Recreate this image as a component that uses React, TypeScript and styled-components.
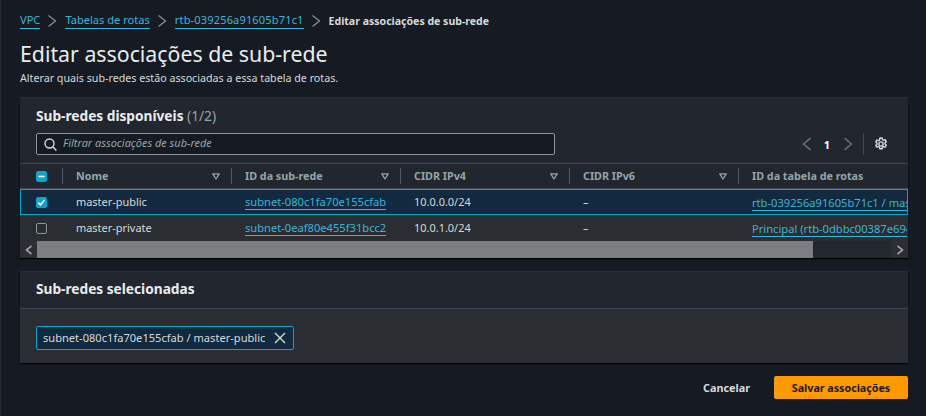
import React from "react";
import styled, { createGlobalStyle } from "styled-components";

const FONT = `"Noto Sans", "Open Sans", sans-serif`;

const Global = createGlobalStyle`
  html, body { margin: 0; padding: 0; background: #161a23; }
  body { font-family: ${FONT}; width: 926px; height: 416px; overflow: hidden; }
  * { box-sizing: border-box; }
`;

const Page = styled.div`
  width: 926px;
  height: 416px;
  padding: 13px 18px 0 20px;
  border-left: 1px solid #262a33;
  color: #d5dbdb;
  display: flex;
  flex-direction: column;
`;
const Crumbs = styled.nav`
  display: flex;
  align-items: center;
  height: 16px;
  margin-left: -1px;
  font-size: 11.1px;
  line-height: 16px;
  white-space: nowrap;
`;
const CrumbLink = styled.a<{ $tracking?: number }>`
  color: #39b6d8;
  border-bottom: 1px solid #39b6d8;
  line-height: 14px;
  height: 16px;
  letter-spacing: ${(p) => p.$tracking ?? 0}px;
`;
const CrumbSep = styled.svg`
  width: 10px;
  height: 12px;
  margin: 0 8px 0 7px;
  flex: none;
`;
const CrumbCurrent = styled.span`
  color: #d5dbdb;
  font-weight: 700;
  font-size: 10.55px;
`;
const Title = styled.h1`
  margin: 10px 0 0 -1px;
  font-size: 21.3px;
  line-height: 30px;
  font-weight: 400;
  color: #eaeded;
`;
const Subtitle = styled.p`
  margin: 0 0 0 -1px;
  font-size: 10.7px;
  line-height: 18px;
  color: #d5dbdb;
`;
const Panel = styled.section<{ $spaced?: boolean }>`
  margin: ${(p) => (p.$spaced ? 13 : 10)}px 0 0 -1px;
  background: #22262e;
  box-shadow: 0 1px 1px #000;
`;
const PanelTop = styled.div`
  padding: 8px 16px 8px;
  height: 66px;
  border-top: 1px solid #2a2e36;
  background: #22262e;
`;
const PanelTitle = styled.h2`
  margin: 0;
  font-size: 13.7px;
  line-height: 20px;
  font-weight: 700;
  color: #eaeded;
`;
const Count = styled.span`
  font-weight: 400;
  color: #95a5a6;
`;
const Toolbar = styled.div`
  display: flex;
  align-items: center;
  margin-top: 7px;
  height: 22px;
`;
const Filter = styled.div`
  width: 519px;
  height: 22px;
  border: 1px solid #8d9499;
  border-radius: 2px;
  background: #161a23;
  display: flex;
  align-items: center;
  padding-left: 7px;
  gap: 6px;
`;
const FilterText = styled.span`
  font-size: 10.95px;
  line-height: 14px;
  margin-top: -2px;
  font-style: italic;
  color: #95a5a6;
`;
const Pager = styled.div`
  margin-left: auto;
  display: flex;
  align-items: center;
  height: 22px;
  padding-right: 4px;
`;
const PageNum = styled.span`
  width: 28px;
  margin-left: -1px;
  text-align: center;
  font-size: 11px;
  font-weight: 700;
  color: #fff;
`;
const PagerDivider = styled.span`
  width: 1px;
  height: 22px;
  background: #414750;
  margin: 0 10px 0 8px;
`;
const TableWrap = styled.div`
  overflow: hidden;
  border-top: 1px solid #414750;
`;
const Row = styled.div<{ $selected?: boolean; $head?: boolean }>`
  display: grid;
  grid-template-columns: 42px repeat(5, 169px);
  width: 888px;
  overflow: hidden;
  align-items: center;
  height: ${(p) => (p.$head ? 25 : 26)}px;
  background: ${(p) => (p.$selected ? "#12293f" : p.$head ? "#22262e" : "#2a2e33")};
  ${(p) => (p.$selected ? "outline: 1px solid #0aa5cf; outline-offset: -1px;" : "")}
  ${(p) => (p.$head ? "border-bottom: 1px solid #414750;" : "")}
`;
const Cell = styled.div`
  font-size: 10.95px;
  line-height: 16px;
  padding-left: 14px;
  white-space: nowrap;
  color: #d5dbdb;
`;
const HeadCell = styled.div`
  display: flex;
  align-items: center;
  justify-content: space-between;
  height: 16px;
  padding: 0 11px 0 13px;
  border-left: 1px solid #545b64;
  font-size: 10.75px;
  font-weight: 700;
  color: #95a5a6;
  white-space: nowrap;
`;
const CheckCell = styled.div`
  padding-left: 16px;
  display: flex;
  align-items: center;
`;
const Check = styled.span<{ $on?: boolean }>`
  width: 11px;
  height: 11px;
  border-radius: 2px;
  display: flex;
  align-items: center;
  justify-content: center;
  background: ${(p) => (p.$on ? "#0aa5cf" : "transparent")};
  border: 1px solid ${(p) => (p.$on ? "#0aa5cf" : "#8d9499")};
`;
const CellLink = styled.a`
  color: #39b6d8;
  border-bottom: 1px solid #39b6d8;
  display: inline-block;
  font-size: 11.15px;
  line-height: 15px;
`;
const Clip = styled.div`
  display: flex;
  overflow: hidden;
  padding: 1px 0 0 14px;
  white-space: nowrap;
  width: 169px;
`;
const Scrollbar = styled.div`
  display: flex;
  height: 17px;
  background: #23272e;
`;
const ScrollBtn = styled.div`
  width: 17px;
  flex: none;
  display: flex;
  align-items: center;
  justify-content: center;
  background: #2b2e33;
`;
const Thumb = styled.div`
  width: 776px;
  background: #7d7e82;
`;
const Track = styled.div`
  flex: 1;
`;
const SelectedHead = styled.div`
  height: 38px;
  padding: 7px 16px;
  background: #22262e;
  border-top: 1px solid #2a2e36;
  border-bottom: 1px solid #414750;
`;
const SelectedBody = styled.div`
  height: 54px;
  padding: 16px 16px 0;
  background: #2a2e33;
`;
const Token = styled.div`
  display: inline-flex;
  align-items: center;
  height: 24px;
  width: 258px;
  padding: 0 7px 0 6px;
  justify-content: space-between;
  background: #12293f;
  border: 1px solid #0aa5cf;
  border-radius: 2px;
  font-size: 11.1px;
  color: #d5dbdb;
  white-space: nowrap;
`;
const Actions = styled.div`
  display: flex;
  justify-content: flex-end;
  align-items: center;
  margin-top: 13px;
  gap: 24px;
`;
const CancelBtn = styled.button`
  background: none;
  border: 0;
  padding: 0;
  font: 700 10.8px ${FONT};
  color: #d5dbdb;
`;
const SaveBtn = styled.button`
  width: 134px;
  height: 23px;
  background: #ff9900;
  border: 0;
  border-radius: 2px;
  font: 700 10.7px ${FONT};
  color: #16191f;
  padding: 0;
`;
const Chevron = ({ dir = "right", color = "#8d9499", size = 12, weight = 1.3 }: { dir?: "left" | "right"; color?: string; size?: number; weight?: number }) => (
  <svg width={size} height={size} viewBox="0 0 12 12" fill="none">
    <path d={dir === "right" ? "M3 1 9 6 3 11" : "M9 1 3 6 9 11"} stroke={color} strokeWidth={weight} />
  </svg>
);
const Sep = () => (
  <CrumbSep viewBox="0 0 10 12" fill="none">
    <path d="M1.5.5 8.5 6 1.5 11.5" stroke="#8d9499" strokeWidth="1.2" />
  </CrumbSep>
);
const Tri = () => (
  <svg width="8" height="7" viewBox="0 0 8 7" fill="none">
    <path d="M.8.8h6.4L4 6z" stroke="#95a5a6" strokeWidth="1.3" strokeLinejoin="round" />
  </svg>
);

export default function App() {
  const heads = ["Nome", "ID da sub-rede", "CIDR IPv4", "CIDR IPv6", "ID da tabela de rotas"];
  return (
    <Page>
      <Global />
      <Crumbs>
        <CrumbLink>VPC</CrumbLink>
        <Sep />
        <CrumbLink>Tabelas de rotas</CrumbLink>
        <Sep />
        <CrumbLink $tracking={0.12}>rtb-039256a91605b71c1</CrumbLink>
        <Sep />
        <CrumbCurrent>Editar associações de sub-rede</CrumbCurrent>
      </Crumbs>
      <Title>Editar associações de sub-rede</Title>
      <Subtitle>Alterar quais sub-redes estão associadas a essa tabela de rotas.</Subtitle>
      <Panel>
        <PanelTop>
          <PanelTitle>
            Sub-redes disponíveis <Count>(1/2)</Count>
          </PanelTitle>
          <Toolbar>
            <Filter>
              <svg width="13" height="13" viewBox="0 0 13 13" fill="none">
                <circle cx="5.5" cy="5.5" r="4.5" stroke="#d5dbdb" strokeWidth="1.4" />
                <path d="m9 9 3.4 3.4" stroke="#d5dbdb" strokeWidth="1.4" />
              </svg>
              <FilterText>Filtrar associações de sub-rede</FilterText>
            </Filter>
            <Pager>
              <Chevron dir="left" color="#687078" size={14} />
              <PageNum>1</PageNum>
              <Chevron color="#687078" size={14} />
              <PagerDivider />
              <svg width="14" height="14" viewBox="0 0 16 16" fill="none" stroke="#d5dbdb" strokeWidth="1.6">
                <circle cx="8" cy="8" r="2.4" />
                <path d="M6.7 1.2h2.6l.4 1.9 1.2.6 1.8-.7 1.3 2.3-1.4 1.3v1.4l1.4 1.3-1.3 2.3-1.8-.7-1.2.7-.4 1.9H6.7l-.4-1.9-1.2-.7-1.8.7L2 9.8l1.4-1.3V7.1L2 5.8l1.3-2.3 1.8.7 1.2-.6z" strokeLinejoin="round" />
              </svg>
            </Pager>
          </Toolbar>
        </PanelTop>
        <TableWrap>
          <Row $head>
            <CheckCell>
              <Check $on>
                <svg width="9" height="9" viewBox="0 0 9 9"><path d="M1.5 4.5h6" stroke="#fff" strokeWidth="1.6" /></svg>
              </Check>
            </CheckCell>
            {heads.map((h, i) => (
              <HeadCell key={h}>
                {h}
                {i < 4 && <Tri />}
              </HeadCell>
            ))}
          </Row>
          <Row $selected>
            <CheckCell>
              <Check $on>
                <svg width="9" height="9" viewBox="0 0 9 9" fill="none"><path d="m1.2 4.6 2.2 2.2 4.2-4.8" stroke="#fff" strokeWidth="1.6" /></svg>
              </Check>
            </CheckCell>
            <Cell>master-public</Cell>
            <Cell><CellLink>subnet-080c1fa70e155cfab</CellLink></Cell>
            <Cell>10.0.0.0/24</Cell>
            <Cell>–</Cell>
            <Clip><CellLink>rtb-039256a91605b71c1 / master-public</CellLink></Clip>
          </Row>
          <Row>
            <CheckCell>
              <Check />
            </CheckCell>
            <Cell>master-private</Cell>
            <Cell><CellLink>subnet-0eaf80e455f31bcc2</CellLink></Cell>
            <Cell>10.0.1.0/24</Cell>
            <Cell>–</Cell>
            <Clip><CellLink>Principal (rtb-0dbbc00387e6949a1)</CellLink></Clip>
          </Row>
          <Scrollbar>
            <ScrollBtn><Chevron dir="left" color="#a0a4a8" size={10} weight={2} /></ScrollBtn>
            <Thumb />
            <Track />
            <ScrollBtn><Chevron color="#a0a4a8" size={10} weight={2} /></ScrollBtn>
          </Scrollbar>
        </TableWrap>
      </Panel>
      <Panel $spaced>
        <SelectedHead>
          <PanelTitle>Sub-redes selecionadas</PanelTitle>
        </SelectedHead>
        <SelectedBody>
          <Token>
            subnet-080c1fa70e155cfab / master-public
            <svg width="12" height="12" viewBox="0 0 12 12" fill="none"><path d="m1 1 10 10M11 1 1 11" stroke="#d5dbdb" strokeWidth="1.4" /></svg>
          </Token>
        </SelectedBody>
      </Panel>
      <Actions>
        <CancelBtn>Cancelar</CancelBtn>
        <SaveBtn>Salvar associações</SaveBtn>
      </Actions>
    </Page>
  );
}
